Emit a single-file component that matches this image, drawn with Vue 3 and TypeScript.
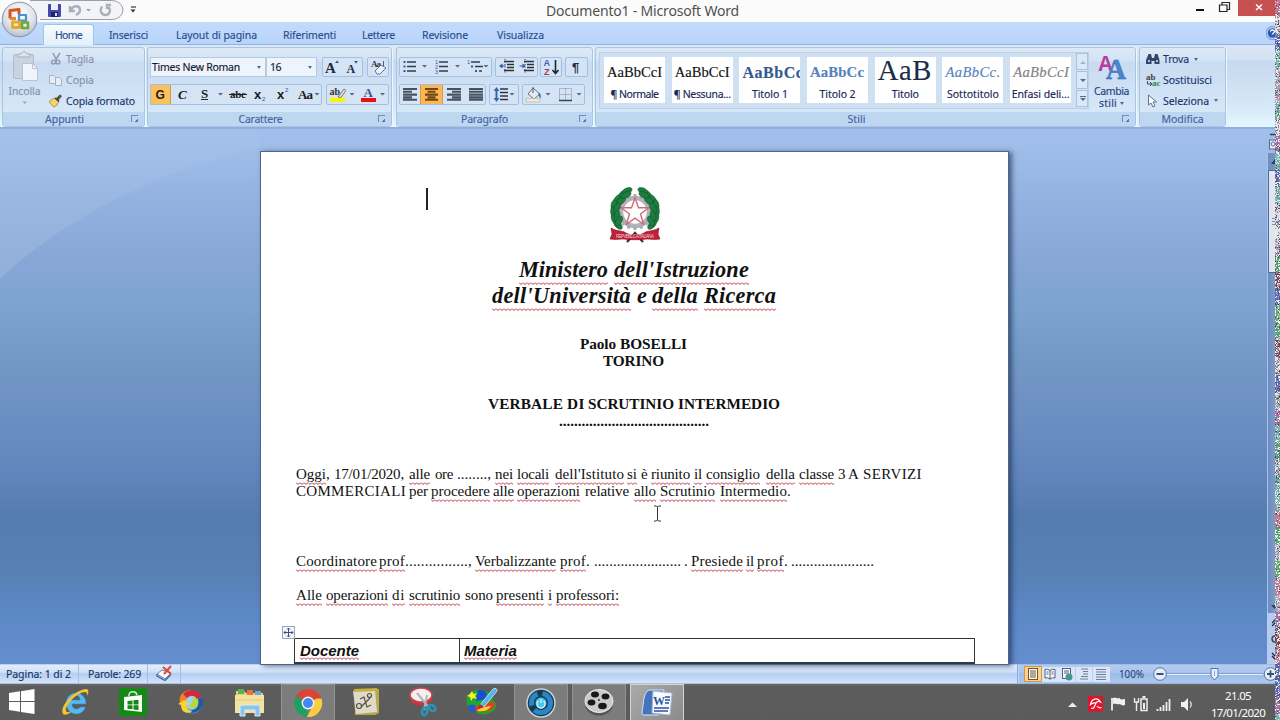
<script setup lang="ts">
interface Seg { t: string; x: number; e: number; u?: boolean }
interface Line { kind: string; gap: number; segs: Seg[] }

/* Spreads the letters of an element so that its text fills the given width. */
const vFit = {
  mounted(el: HTMLElement, binding: { value: number }) {
    const range = document.createRange()
    range.selectNodeContents(el)
    const natural = range.getBoundingClientRect().width
    const count = (el.textContent ?? '').length
    if (count > 0) el.style.letterSpacing = `${(binding.value - natural) / count}px`
  },
}

const tabs = [
  { t: 'Home', w: 27, pad: 11, on: true },
  { t: 'Inserisci', w: 39, pad: 15 },
  { t: 'Layout di pagina', w: 81, pad: 13 },
  { t: 'Riferimenti', w: 53, pad: 13 },
  { t: 'Lettere', w: 33, pad: 13 },
  { t: 'Revisione', w: 46, pad: 14 },
  { t: 'Visualizza', w: 47, pad: 15 },
]

const styles = [
  { s: 'AaBbCcI', n: '¶ Normale', w: 48, sw: 55, c: 'norm' },
  { s: 'AaBbCcI', n: '¶ Nessuna...', w: 57, sw: 55, c: 'norm' },
  { s: 'AaBbCc', n: 'Titolo 1', w: 36, sw: 61, c: 't1' },
  { s: 'AaBbCc', n: 'Titolo 2', w: 36, sw: 54, c: 't2' },
  { s: 'AaB', n: 'Titolo', w: 27, sw: 54, c: 't0' },
  { s: 'AaBbCc.', n: 'Sottotitolo', w: 52, sw: 55, c: 'sub' },
  { s: 'AaBbCcI', n: 'Enfasi deli...', w: 58, sw: 56, c: 'enf' },
]

const lines: Line[] = [
  { kind: 'head', gap: 105, segs: [{ t: 'Ministero', x: 519, e: 608, u: true }, { t: "dell'Istruzione", x: 614, e: 749, u: true }] },
  { kind: 'head', gap: 0, segs: [{ t: "dell'Università", x: 492, e: 631, u: true }, { t: 'e', x: 637, e: 646 }, { t: 'della', x: 652, e: 698, u: true }, { t: 'Ricerca', x: 704, e: 776, u: true }] },
  { kind: 'bold', gap: 26, segs: [{ t: 'Paolo', x: 580, e: 616 }, { t: 'BOSELLI', x: 620, e: 687 }] },
  { kind: 'bold', gap: 0, segs: [{ t: 'TORINO', x: 603, e: 664 }] },
  { kind: 'bold', gap: 26, segs: [{ t: 'VERBALE', x: 488, e: 563 }, { t: 'DI', x: 567, e: 585 }, { t: 'SCRUTINIO', x: 588, e: 674 }, { t: 'INTERMEDIO', x: 678, e: 780 }] },
  { kind: 'bold', gap: 0, segs: [{ t: '........................................', x: 559, e: 709 }] },
  {
    kind: 'body', gap: 37, segs: [
      { t: 'Oggi', x: 296, e: 326, u: true }, { t: ',', x: 326, e: 329 }, { t: '17/01/2020,', x: 334, e: 404 }, { t: 'alle', x: 409, e: 430, u: true },
      { t: 'ore', x: 435, e: 453 }, { t: '........,', x: 457, e: 491 }, { t: 'nei', x: 495, e: 513, u: true }, { t: 'locali', x: 517, e: 549, u: true },
      { t: "dell'Istituto", x: 555, e: 624, u: true }, { t: 'si', x: 627, e: 637, u: true }, { t: 'è', x: 641, e: 647 }, { t: 'riunito', x: 651, e: 690, u: true },
      { t: 'il', x: 694, e: 702, u: true }, { t: 'consiglio', x: 706, e: 760, u: true }, { t: 'della', x: 766, e: 795, u: true }, { t: 'classe', x: 799, e: 834, u: true },
      { t: '3', x: 838, e: 845 }, { t: 'A', x: 848, e: 859 }, { t: 'SERVIZI', x: 863, e: 922 },
    ],
  },
  {
    kind: 'body', gap: 0, segs: [
      { t: 'COMMERCIALI', x: 296, e: 406 }, { t: 'per', x: 409, e: 428 }, { t: 'procedere', x: 431, e: 490, u: true }, { t: 'alle', x: 493, e: 514, u: true },
      { t: 'operazioni', x: 517, e: 580, u: true }, { t: 'relative', x: 585, e: 629 }, { t: 'allo', x: 634, e: 656, u: true }, { t: 'Scrutinio', x: 660, e: 715, u: true },
      { t: 'Intermedio', x: 720, e: 787, u: true }, { t: '.', x: 787, e: 790 },
    ],
  },
  {
    kind: 'body', gap: 53, segs: [
      { t: 'Coordinatore', x: 296, e: 377, u: true }, { t: 'prof', x: 379, e: 405, u: true }, { t: '................,', x: 405, e: 472 }, { t: 'Verbalizzante', x: 475, e: 556, u: true },
      { t: 'prof', x: 560, e: 586, u: true }, { t: '.', x: 586, e: 590 }, { t: '.......................', x: 594, e: 681 }, { t: '.', x: 684, e: 688 },
      { t: 'Presiede', x: 691, e: 743, u: true }, { t: 'il', x: 746, e: 754, u: true }, { t: 'prof', x: 757, e: 784, u: true }, { t: '.', x: 784, e: 788 },
      { t: '......................', x: 791, e: 874 },
    ],
  },
  {
    kind: 'body', gap: 17, segs: [
      { t: 'Alle', x: 296, e: 322, u: true }, { t: 'operazioni', x: 326, e: 388, u: true }, { t: 'di', x: 392, e: 405, u: true }, { t: 'scrutinio', x: 409, e: 460, u: true },
      { t: 'sono', x: 465, e: 493 }, { t: 'presenti', x: 496, e: 544, u: true }, { t: 'i', x: 548, e: 552, u: true }, { t: 'professori:', x: 556, e: 619, u: true },
    ],
  },
]
const PAGE_X = 260
function place(segs: Seg[], i: number) {
  const from = i === 0 ? PAGE_X : segs[i - 1].e
  return { marginLeft: `${segs[i].x - from}px`, width: `${segs[i].e - segs[i].x}px` }
}

/* Interference strip down the right edge of the display. */
let seed = 20200117
function rnd() {
  seed = (seed * 1103515245 + 12345) % 2147483648
  return seed / 2147483648
}
const hues = ['#3fae5a', '#c9c9d4', '#b45fae', '#d8d4dc', '#4b63c8', '#6fc3b5', '#d9718f', '#e4e4e4', '#8f3540', '#9fb0c4', '#57c04f', '#b8a6c0']
const noise: { x: number; y: number; c: string }[] = []
let tint = hues[0]
for (let y = 0; y < 720; y++) {
  if (y % 17 === 0) tint = hues[Math.floor(rnd() * hues.length)]
  for (let x = 0; x < 5; x++) {
    const k = rnd()
    const c = k < 0.38 ? tint : k < 0.62 ? '#ececf0' : k < 0.84 ? '#8a8f98' : k < 0.92 ? '#4b4f5a' : hues[Math.floor(rnd() * hues.length)]
    noise.push({ x, y, c })
  }
}

const teeth = Array.from({ length: 16 }, (_, i) => i * 22.5)
const leaves = [
  { x: 13, y: 9, r: -50 }, { x: 18, y: 5, r: -25 }, { x: 8, y: 14, r: -62 }, { x: 5, y: 19, r: -80 }, { x: 4.500, y: 26, r: -95 },
  { x: 5.500, y: 33, r: -112 }, { x: 9, y: 39, r: -135 }, { x: 12, y: 15, r: -40 }, { x: 8, y: 22, r: -65 }, { x: 8, y: 30, r: -80 },
  { x: 17, y: 9, r: -25 }, { x: 10, y: 35, r: -60 },
]
</script>

<template>
  <div class="screen">
    <header class="titlebar">
      <div class="qat">
        <svg width="140" height="22" viewBox="0 0 140 22">
          <path d="M30 .5H112a11 9.5 0 0 1 0 19H40" fill="#f3f4f8" stroke="#9a9faa" />
          <rect x="48" y="4" width="13" height="13" rx="1" fill="#4648a8" /><rect x="51" y="4" width="7" height="6" fill="#e9efff" /><rect x="51" y="12" width="7" height="5" fill="#20246e" /><rect x="55" y="13" width="2" height="3" fill="#dde" />
          <path d="M70 6v5h5M71 10c2-5 9-5 9 0 0 3-2 4-4 5" fill="none" stroke="#a9afbd" stroke-width="2.4" />
          <path d="M86 9h5l-2.500 2.500z" fill="#9ca0aa" />
          <path d="M102 6.500c-3 5 0 8.500 3.500 8.500s6-4 3-8M111 5h-4v4" fill="none" stroke="#a9afbd" stroke-width="2.300" />
          <path d="M131 7h5" stroke="#444" stroke-width="1.300" /><path d="M130.500 9.500h5l-2.500 3z" fill="#333" />
        </svg>
      </div>
      <div class="apptitle"><span v-fit="193">Documento1 - Microsoft Word</span></div>
      <div class="wincontrols">
        <svg width="90" height="18" viewBox="1190 0 90 18">
          <rect x="1196" y="9" width="8" height="2" fill="#111" />
          <path d="M1222 4.500v-2h7.500v7h-2M1219.500 5h7.500v6.500h-7.500z" fill="none" stroke="#222" stroke-width="1.200" />
          <rect x="1238" y="0" width="42" height="16" fill="#c75050" />
          <path d="M1256 4.500l6 5.500M1262 4.500l-6 5.500" stroke="#fff" stroke-width="1.600" />
        </svg>
      </div>
    </header>

    <nav class="tabs">
      <div v-for="tab in tabs" :key="tab.t" class="tab" :class="{ on: tab.on }" :style="{ paddingLeft: tab.pad + 'px', paddingRight: (tab.on ? 10 : tab.pad) + 'px' }">
        <span v-fit="tab.w" :style="{ width: tab.w + 'px' }">{{ tab.t }}</span>
      </div>
      <svg class="help" width="14" height="18" viewBox="1266 24 14 18"><circle cx="1272.500" cy="33" r="6.500" fill="#bcd2f2" stroke="#6d8fcc" /><circle cx="1272.500" cy="33" r="4.800" fill="#2b59bd" /><path d="M1270.500 31.500c0-2 4-2 4 0 0 1.500-2 1.500-2 3" stroke="#fff" stroke-width="1.300" fill="none" /></svg>
    </nav>

    <svg class="orb" width="40" height="40" viewBox="0 0 40 40">
      <defs><radialGradient id="orb" cx=".5" cy=".35" r=".7"><stop offset="0" stop-color="#fff" /><stop offset=".6" stop-color="#dfe3ec" /><stop offset="1" stop-color="#a9b2c3" /></radialGradient></defs>
      <circle cx="19.500" cy="19.500" r="17.300" fill="url(#orb)" stroke="#8792a8" />
      <g fill="none" stroke-width="3" stroke-linejoin="round">
        <path d="M10 18.500v-8l9-1v5" stroke="#d9531e" /><path d="M10 18.500h6" stroke="#e8862a" />
        <rect x="19" y="15" width="7" height="5.500" stroke="#4a90d9" stroke-width="2.200" />
        <path d="M12.500 22v5.500h7v-5.500z" stroke="#e9a823" stroke-width="2.800" />
        <rect x="22" y="22.500" width="6" height="5.500" stroke="#6eaa2f" stroke-width="2.600" />
      </g>
    </svg>

    <div class="ribbon">
      <section class="group appunti">
        <div class="body">
          <div class="paste">
            <svg width="30" height="32" viewBox="10 51 30 32"><rect x="13.500" y="54.500" width="20" height="24" rx="1.500" fill="#c9d2df" stroke="#b0bac9" /><path d="M18 57v-3h3c1-3 5-3 6 0h3v3z" fill="#dde3ec" stroke="#a4afbf" /><path d="M22.500 63.500h10l5 5v12h-15z" fill="#eff4fb" stroke="#b9c4d4" /><path d="M32.500 63.500v5h5" fill="none" stroke="#b9c4d4" /></svg>
            <span class="lbl dim"><b v-fit="32">Incolla</b></span>
            <svg width="6" height="4" viewBox="0 0 6 4"><path d="M.5.500h4.500l-2.200 2.500z" fill="#9aa8bd" /></svg>
          </div>
          <div class="stack">
            <div class="cmd dim"><svg width="16" height="14" viewBox="48 52 16 14"><g fill="none" stroke="#8d98aa" stroke-width="1.400"><path d="M53 53l3.500 7M60 53l-4.500 7" /><circle cx="53.500" cy="62" r="1.900" /><circle cx="58" cy="62" r="1.900" /></g></svg><span v-fit="28">Taglia</span></div>
            <div class="cmd dim"><svg width="16" height="14" viewBox="48 73 16 14"><g fill="#e6edf6" stroke="#a6b2c4"><path d="M49.500 75.500h4l2 2v6h-6z" /><path d="M55.500 77.500h4l2 2v6h-6z" /></g></svg><span v-fit="28">Copia</span></div>
            <div class="cmd"><svg width="16" height="14" viewBox="48 94 16 14"><path d="M55 99l5-4.500 2 1.500-4 5z" fill="#5a5446" /><path d="M51 100l4-2 4 3-2 4-3 2-5-5z" fill="#f2d36c" stroke="#a8842b" stroke-width=".8" /><path d="M55 98l4 3.500" stroke="#3d3a35" stroke-width="1.500" /></svg><span v-fit="69">Copia formato</span></div>
          </div>
        </div>
        <footer><span v-fit="39">Appunti</span><i class="launch"></i></footer>
      </section>

      <section class="group carattere">
        <div class="rows">
          <div class="row">
            <div class="combo font"><span v-fit="88">Times New Roman</span><i class="dd"></i></div>
            <div class="combo size"><span v-fit="11">16</span><i class="dd"></i></div>
            <svg class="box m5" width="41" height="20" viewBox="322 57 41 20"><g class="serif" fill="#222b3c" font-weight="bold"><text x="325" y="73" font-size="15">A</text><text x="346.500" y="73" font-size="12">A</text></g><path d="M335 63h4l-2-2.500zM354 61h4l-2 2.500z" fill="#3a4f88" /></svg>
            <svg class="box m4" width="22" height="20" viewBox="366 57 22 20"><text x="370" y="67" class="serif" font-size="9" font-weight="bold" fill="#333" textLength="10">Aa</text><path d="M382.500 61v5" stroke="#3d5c9c" /><path d="M374 71l6-6 5 3-6 6h-3z" fill="#eef1fb" stroke="#66719a" /></svg>
          </div>
          <div class="row r2">
            <svg class="box" width="172" height="21" viewBox="150 84 172 21">
              <rect x="150.500" y="84.500" width="20" height="20" fill="#fdc15c" stroke="#d39a48" />
              <g fill="#1b1b22"><text x="155.500" y="98.500" class="sans" font-size="12" font-weight="bold">G</text><text x="178" y="98.500" class="serif" font-size="13" font-weight="bold" font-style="italic">C</text><text x="201" y="98" class="serif" font-size="13" font-weight="bold">S</text><path d="M201 99.500h7" stroke="#222" /><text x="230" y="98" class="serif" font-size="11" font-weight="bold" textLength="16">abc</text><path d="M229 94.500h18" stroke="#222" /><text x="254" y="98.500" class="sans" font-size="13" font-weight="bold">x</text><text x="277" y="98.500" class="sans" font-size="13" font-weight="bold">x</text><text x="298" y="99" class="serif" font-size="13" font-weight="bold" textLength="15">Aa</text></g>
              <g fill="#2c4f9b" class="sans" font-size="6"><text x="262" y="100.500">2</text><text x="285" y="92">2</text></g>
              <path d="M218 93h5l-2.500 2.500zM314.500 93h5l-2.500 2.500z" fill="#56698f" />
            </svg>
            <svg class="box m4" width="63" height="21" viewBox="325 84 63 21"><rect x="329" y="97.500" width="15" height="4.500" fill="#f8f412" /><text x="328.500" y="95" class="serif" font-size="10" font-weight="bold" fill="#333">ab</text><path d="M337 97l6-8 2 1.500-5 7z" fill="#dcdcc8" stroke="#666" stroke-width=".8" /><rect x="360" y="98" width="15" height="4" fill="#e41218" /><text x="362.500" y="97" class="serif" font-size="13" font-weight="bold" fill="#40548c">A</text><path d="M348.500 93h5l-2.500 2.500zM379 93h5l-2.500 2.500z" fill="#56698f" /></svg>
          </div>
        </div>
        <footer><span v-fit="44">Carattere</span><i class="launch"></i></footer>
      </section>

      <section class="group paragrafo">
        <div class="rows">
          <div class="row">
            <svg class="box" width="93" height="20" viewBox="399 57 93 20">
              <path d="M407 62h9M407 66.500h9M407 71h9M439 62h9M439 66.500h9M439 71h9" stroke="#333c50" stroke-width="1.500" /><path d="M403.500 62h2M403.500 66.500h2M403.500 71h2" stroke="#2d58ac" stroke-width="2" />
              <g class="sans" font-size="5.500" fill="#2d58ac"><text x="435" y="64">1</text><text x="435" y="69">2</text><text x="435" y="74">3</text><text x="467" y="64">1</text></g>
              <path d="M471 62h9M475 66.500h8M479 71h3" stroke="#333c50" stroke-width="1.500" /><path d="M471 66.500h2M475 71h2" stroke="#2d58ac" stroke-width="2" />
              <path d="M422 65h5l-2.500 2.500zM455 65h5l-2.500 2.500zM483.500 65h5l-2.500 2.500z" fill="#56698f" />
            </svg>
            <svg class="box m3" width="43" height="20" viewBox="495 57 43 20"><path d="M504 61.500h10M507 64.500h7M507 67.500h7M504 70.500h10M524 61.500h10M527 64.500h7M527 67.500h7M524 70.500h10" stroke="#2a3040" stroke-width="1.700" /><path d="M499 66l3.500-2.500v2h3v1h-3v2zM525.500 66l-3-2.500v2h-3v1h3v2z" fill="#2d58ac" /><path d="M505 59v15M525 59v15" stroke="#333" stroke-dasharray="1 1.500" /></svg>
            <svg class="box m2" width="22" height="20" viewBox="540 57 22 20"><text x="543.500" y="65.500" class="sans" font-size="9" font-weight="bold" fill="#3a62b4">A</text><text x="544" y="74.500" class="sans" font-size="9" font-weight="bold" fill="#a83a4c">Z</text><path d="M555.500 60v12M552.500 70l3 3.500 3-3.500" fill="none" stroke="#1d2330" stroke-width="1.600" /></svg>
            <svg class="box m3" width="23" height="20" viewBox="565 57 23 20"><text x="572" y="71.500" class="sans" font-size="13" font-weight="bold" fill="#252c3a">¶</text></svg>
          </div>
          <div class="row r2">
            <svg class="box" width="87" height="21" viewBox="399 84 87 21"><rect x="420.500" y="84.500" width="22" height="20" fill="#fdb653" stroke="#d39a48" /><g stroke="#465062" stroke-width="2.100"><path d="M403 89h14M403 91.800h9M403 94.600h14M403 97.400h9M403 99.800h14" /><path d="M447 89h14M452 91.800h9M447 94.600h14M452 97.400h9M447 99.800h14" /><path d="M469 89h14M469 91.800h14M469 94.600h14M469 97.400h14M469 99.800h14" /><path d="M425 89h13M427.500 91.800h8M425 94.600h13M427.500 97.400h8M425 99.800h13" stroke="#6e4712" /></g></svg>
            <svg class="box m3" width="30" height="21" viewBox="489 84 30 21"><path d="M500 89h8M500 92.500h8M500 96h8M500 99.500h8" stroke="#2d3546" stroke-width="1.500" /><path d="M493.500 91l3-4 3 4h-2v7h2l-3 4-3-4h2v-7z" fill="#3a66b0" /><path d="M509.500 93h5l-2.500 2.500z" fill="#56698f" /></svg>
            <svg class="box m3" width="63" height="21" viewBox="522 84 63 21"><path d="M533 88l7 6-6 5-6-5z" fill="#e4eaf4" stroke="#66738c" /><path d="M533 93v-6" stroke="#555" /><path d="M538 93c3 0 3 3 3 5-2 0-2-3-3-5" fill="#3b70bd" /><rect x="526" y="98.500" width="14" height="3.500" fill="#eee9d6" stroke="#b2b0a4" stroke-width=".6" /><path d="M559.500 88.500h12v12h-12zM565.500 88.500v12M559.500 94.500h12" fill="none" stroke="#7d8aa3" stroke-dasharray="1 1" /><path d="M559 100.500h13" stroke="#38435a" stroke-width="1.400" /><path d="M545.500 93h5l-2.500 2.500zM576.500 93h5l-2.500 2.500z" fill="#56698f" /></svg>
          </div>
        </div>
        <footer><span v-fit="47">Paragrafo</span><i class="launch"></i></footer>
      </section>

      <section class="group stili">
        <div class="body">
          <div class="gallery">
            <div v-for="(s, i) in styles" :key="i" class="card">
              <div class="sample" :class="s.c"><span v-fit="s.sw">{{ s.s }}</span></div>
              <div class="sname"><span v-fit="s.w">{{ s.n }}</span></div>
            </div>
            <div class="gscroll"><i class="up"></i><i class="down"></i><i class="more"></i></div>
          </div>
          <div class="change">
            <svg width="32" height="28" viewBox="1095 53 32 28"><text x="1097" y="71" class="sans" font-size="22" font-weight="bold" fill="#b83c9f" textLength="15" lengthAdjust="spacingAndGlyphs">A</text><text x="1105" y="79" class="serif" font-size="29" font-weight="bold" textLength="20" lengthAdjust="spacingAndGlyphs" fill="#4d84cf" stroke="#3767ae" stroke-width=".5">A</text></svg>
            <span class="lbl"><b v-fit="35">Cambia</b></span>
            <span class="lbl second"><b v-fit="18">stili</b><i class="dd"></i></span>
          </div>
        </div>
        <footer><span v-fit="18">Stili</span><i class="launch"></i></footer>
      </section>

      <section class="group modifica">
        <div class="stack">
          <div class="cmd"><svg width="18" height="14" viewBox="1144 52 18 14"><path d="M1146 64v-4l2.500-6h2.500l1 4h2l1-4h2.500l2 6v4h-5v-3h-3v3z" fill="#33466b" /><path d="M1148 61h2M1156 61h2" stroke="#dbe6f8" stroke-width="1.500" /></svg><span v-fit="26">Trova</span><i class="dd"></i></div>
          <div class="cmd"><svg width="18" height="14" viewBox="1144 73 18 14"><g class="serif" font-weight="bold" font-size="9"><text x="1146" y="79.500" fill="#444">ab</text><text x="1152" y="86" fill="#2e8a4a">ac</text></g><path d="M1147.500 81v3h4M1150 82l2 2-2 2" stroke="#445" fill="none" /></svg><span v-fit="49">Sostituisci</span></div>
          <div class="cmd"><svg width="18" height="14" viewBox="1144 94 18 14"><path d="M1148.500 95v10l2.500-2 2 4 2-1-2-4h3.500z" fill="#fff" stroke="#5f6f8c" /></svg><span v-fit="46">Seleziona</span><i class="dd"></i></div>
        </div>
        <footer><span v-fit="42">Modifica</span></footer>
      </section>
    </div>

    <main class="work">
      <svg class="swoosh" width="260" height="180" viewBox="0 0 260 180"><defs><linearGradient id="sw" x1="0" y1="0" x2="0" y2="1"><stop offset="0" stop-color="#fff" stop-opacity=".02" /><stop offset="1" stop-color="#fff" stop-opacity=".12" /></linearGradient></defs><path d="M0 0H260V18C160 40 60 92 0 150z" fill="url(#sw)" /></svg>
      <article class="page">
        <i class="caret"></i>
        <svg class="emblem" width="52" height="58" viewBox="0 0 52 58">
          <circle cx="26" cy="26" r="14" fill="#fff" stroke="#b2b5b8" stroke-width="4.500" />
          <rect v-for="a in teeth" :key="a" x="24.500" y="8" width="3" height="4" fill="#a9acaf" :transform="`rotate(${a} 26 26)`" />
          <path d="M26 12l3.500 9.700h10.300l-8.300 6.300 3.100 10.200-8.600-6-8.600 6 3.100-10.200-8.300-6.300h10.300z" fill="#fff" stroke="#cf6a7a" stroke-width="1.400" />
          <g fill="#1d7c3e" stroke="#0f5530" stroke-width=".5">
            <g v-for="side in [1, -1]" :key="side" :transform="side === 1 ? '' : 'translate(52 0) scale(-1 1)'">
              <ellipse v-for="(l, i) in leaves" :key="i" :cx="l.x" :cy="l.y" rx="5.400" ry="2.900" :transform="`rotate(${l.r} ${l.x} ${l.y})`" />
            </g>
          </g>
          <path d="M18 56l8-9 8 9" stroke="#4a2a20" stroke-width="2.200" fill="none" />
          <path d="M2 42c7 4 11 2 15 5 6 3 12 3 18 0 4-3 8-1 15-5l-1 6 2 5c-5 1-9 0-13 0-7 1-17 1-24 0-4 0-8 1-13 0l2-5z" fill="#c11f3a" stroke="#7f1325" stroke-width=".6" />
          <text x="7" y="52" font-size="4.500" textLength="38" fill="#f3c4ca" class="sans">REPVBBLICA ITALIANA</text>
        </svg>
        <div v-for="(line, li) in lines" :key="li" class="line" :class="line.kind" :style="{ marginTop: line.gap + 'px' }">
          <span v-for="(s, si) in line.segs" :key="si" v-fit="s.e - s.x" class="seg" :class="{ bad: s.u }" :style="place(line.segs, si)">{{ s.t }}</span>
        </div>
        <svg class="ibeam" width="9" height="17" viewBox="0 0 9 17"><path d="M1 1h2.500l1 1 1-1H8M4.500 2v13M1 16h2.500l1-1 1 1H8" fill="none" stroke="#333" /></svg>
        <svg class="handle" width="13" height="13" viewBox="0 0 13 13"><rect x=".5" y=".5" width="12" height="12" fill="#f2f5fb" stroke="#9aa4b8" /><path d="M6.500 2v9M2 6.500h9M5 3.500l1.500-1.500L8 3.500M5 9.500L6.500 11 8 9.500M3.500 5L2 6.500 3.500 8M9.500 5L11 6.500 9.500 8" fill="none" stroke="#3d507c" /></svg>
        <div class="table">
          <div class="cell first"><span v-fit="59" class="bad">Docente</span></div>
          <div class="cell"><span v-fit="53" class="bad">Materia</span></div>
        </div>
      </article>
      <svg class="vscroll" width="13" height="535" viewBox="1267 129 13 535">
        <defs><linearGradient id="vs" x1="0" x2="1"><stop offset="0" stop-color="#6d8cbd" /><stop offset="1" stop-color="#86a4d2" /></linearGradient></defs>
        <rect x="1268" y="153" width="12" height="511" fill="url(#vs)" /><path d="M1267.500 153v511" stroke="#a4c3ee" />
        <path d="M1270 134.500h10" stroke="#2b4066" stroke-width="1.500" /><rect x="1269.500" y="140" width="10" height="9" fill="#e8eefa" stroke="#56698f" /><circle cx="1273" cy="144" r="2" fill="none" stroke="#56698f" />
        <rect x="1269" y="154" width="11" height="15" fill="#7791bd" /><path d="M1271 164l4-5 4 5z" fill="#26446b" />
        <rect x="1268.500" y="170.500" width="12" height="102" fill="#dfe6f1" stroke="#56698f" /><path d="M1272 218.500h8M1272 221.500h8M1272 224.500h8" stroke="#7f93b3" />
        <path d="M1271 605h7l-3.500 4z" fill="#26446b" />
        <rect x="1267" y="613" width="13" height="51" fill="#b5ccee" />
        <path d="M1272 623l3-3 3 3M1272 626l3-3 3 3M1272 653l3 3 3-3M1272 656l3 3 3-3" fill="none" stroke="#1e2f50" stroke-width="1.400" /><circle cx="1275" cy="639" r="3" fill="none" stroke="#33445f" stroke-width="1.400" />
      </svg>
    </main>

    <footer class="status">
      <span class="st s1"><b v-fit="65">Pagina: 1 di 2</b></span>
      <span class="st s2"><b v-fit="53">Parole: 269</b></span>
      <span class="st s3"><svg width="18" height="16" viewBox="156 666 18 16"><path d="M157 675l5-4 9 3-6 6z" fill="#f4f7fc" stroke="#6b83b4" /><path d="M157 675v2l8 4.500 6-6" fill="none" stroke="#41629f" stroke-width="1.300" /><path d="M163 668l8 7M171 667l-7 8" stroke="#e0492d" stroke-width="1.900" /></svg></span>
      <svg class="view" width="264" height="20" viewBox="1016 664 264 20">
        <path d="M1017.500 664v20" stroke="#8aabdb" /><path d="M1018.500 664v20" stroke="#f3f8ff" />
        <rect x="1018" y="664" width="262" height="20" fill="#7fa5de" opacity=".45" />
        <rect x="1024" y="667" width="86" height="15" fill="#d9e6f7" /><rect x="1024.500" y="666.500" width="17" height="15" fill="#fbd18c" stroke="#cf9a50" />
        <rect x="1028.500" y="668.500" width="9" height="11" fill="#fff8e8" stroke="#695737" /><path d="M1030 671h6M1030 673h6M1030 675h6M1030 677h6" stroke="#695737" />
        <path d="M1045 669.500q2.500-1 5 1 2.500-2 5-1v8.500q-2.500-1-5 1-2.500-2-5-1zM1050 670.500v9M1046.500 672h2M1046.500 674h2M1051.500 672h2M1051.500 674h2" fill="#f7fafe" stroke="#50607d" />
        <rect x="1062.500" y="668.500" width="8" height="10" fill="#f7fafe" stroke="#50607d" /><path d="M1064 671h5M1064 673h5" stroke="#50607d" /><circle cx="1069" cy="677" r="3.500" fill="#4a968b" />
        <path d="M1081 669h7M1083 671.500h5M1083 674h5M1081 676.500h7M1080 679h8M1096 669.500h10M1096 672h10M1096 674.500h10M1096 677h10M1096 679.500h10" stroke="#707f98" stroke-width="1.200" />
        <path d="M1075.500 667v15M1092.500 667v15" stroke="#bdd0eb" />
        <text x="1119" y="678" class="ui" font-size="10.500" textLength="25" lengthAdjust="spacingAndGlyphs" fill="#1f3a72">100%</text>
        <path d="M1167 674.500h96" stroke="#e6effb" /><path d="M1167 673.500h96" stroke="#6b8ec6" stroke-width=".6" />
        <g fill="#e5eefb" stroke="#5576ad"><circle cx="1160" cy="674" r="6.300" /><circle cx="1270.500" cy="674" r="6.300" /><path d="M1211 668.500h7v7.500l-3.500 4-3.500-4z" /></g>
        <path d="M1156.500 674h7M1267 674h7M1270.500 670.500v7" stroke="#384e78" stroke-width="1.800" /><path d="M1214.500 671v5" stroke="#8ea9d2" />
      </svg>
    </footer>

    <div class="taskbar">
      <div class="slot start"><svg width="26" height="26" viewBox="0 0 26 26"><path d="M0 4l11-1.700V12H0zM12 2.200L25.500 0v12H12zM0 13h11v9.700L0 21zM12 13h13.500v12L12 22.900z" fill="#fff" /></svg></div>
      <div class="slot"><svg width="30" height="30" viewBox="0 0 30 30"><path d="M6 15a10 10 0 1 1 20 2H12c0 6 7 6 8 3h5.500C22 31 6 29 6 15zm6-2h8c0-6-7-6-8 0z" fill="#58b9ee" stroke="#2f86c4" stroke-width=".6" /><path d="M3 27C-1 20 14 3 26 2c4 0 2 5 1 7 0-3 0-4-2-4C17 5 4 19 6 24c1 2 4 1 6 0-3 3-7 5-9 3z" fill="#f6c62d" /></svg></div>
      <div class="slot"><svg width="28" height="28" viewBox="0 0 28 28"><rect width="28" height="28" fill="#138a13" /><path d="M5 9l18-2v17L5 22z" fill="#fff" /><path d="M10 8c-1-5 7-6 8-1" fill="none" stroke="#cfe8cd" stroke-width="1.600" /><path d="M8.500 13l5-.6v4h-5zM14.500 12.300l5-.6v4.700h-5zM8.500 17.300h5v4l-5-.5zM14.500 17.300h5v4.800l-5-.6z" fill="#138a13" /></svg></div>
      <div class="slot"><svg width="26" height="28" viewBox="0 0 26 28"><circle cx="14" cy="14.500" r="11" fill="#4aa0d8" /><circle cx="14" cy="14.500" r="7" fill="#9bd3ee" /><path d="M15 9c5 1 7 4 5 8-2 4-7 4-9 1 3-2 4-5 4-9z" fill="#b5d83c" /><path d="M2 15C0 7 6 2 13 2l2 5c-6 0-8 4-7 9z" fill="#f2812a" /><path d="M5 6c5-6 15-5 19 3l-5 2c-3-4-6-4-10-1z" fill="#d2283b" /><path d="M0 16l6-4 6 4-4 1.500c1 4 4 5 7 6-6 3-12 1-12-6.500z" fill="#f6d434" /><path d="M14 22c6-1 7-6 6-11l4-2c4 8-2 16-11 16z" fill="#1f5aa3" /></svg></div>
      <div class="slot"><svg width="32" height="30" viewBox="0 0 32 30"><path d="M2 4h8l2 2h17v20H2z" fill="#e6ce7e" /><rect x="4" y="2" width="6" height="5" fill="#5fae55" /><rect x="13" y="3" width="6" height="5" fill="#e8734b" /><rect x="21" y="4" width="6" height="5" fill="#68a7df" /><path d="M1 8h29v18H1z" fill="#f4e3a0" /><path d="M2 13h27" stroke="#e2c877" /><path d="M6 29V20q0-2 2-2h16q2 0 2 2v9h-5v-6H11v6z" fill="#8fc4ea" stroke="#d7ecfa" /></svg></div>
      <div class="slot open"><svg width="30" height="30" viewBox="0 0 30 30"><path d="M15 15L3 8A14 14 0 0 1 27.500 8.500z" fill="#dd4437" /><path d="M15 15L3 8A14 14 0 0 0 14 29z" fill="#1da160" /><path d="M15 15L27.500 8.500A14 14 0 0 1 14 29l6-12z" fill="#fdcd41" /><path d="M14 9H28" stroke="#dd4437" stroke-width="3" /><circle cx="15" cy="15" r="6.400" fill="#f4f6f6" /><circle cx="15" cy="15" r="5" fill="#4587f3" /></svg></div>
      <div class="slot"><svg width="30" height="30" viewBox="0 0 30 30"><path d="M3 2h25v24l-4 2H4z" fill="#b5a94a" /><path d="M2 4l22-1 2 22-21 2z" fill="#dedbc9" /><path d="M3 2l23-1v3L3 5z" fill="#c9b13b" /><g fill="none" stroke="#554f44" stroke-width="1.200"><circle cx="8" cy="19" r="2.500" /><circle cx="18.500" cy="8.500" r="2" /><path d="M10 20l9-9M9 12l4-2 3 10 4-2" /></g></svg></div>
      <div class="slot"><svg width="30" height="30" viewBox="0 0 30 30"><ellipse cx="12" cy="11" rx="11" ry="8" fill="#c23742" /><ellipse cx="12" cy="8" rx="11" ry="7" fill="#f5f0ef" stroke="#cf4450" stroke-width="1.500" /><path d="M8 6l13 16M18 8l-3 15" stroke="#a9b7bd" stroke-width="2" /><ellipse cx="23" cy="21" rx="3.800" ry="2.600" fill="none" stroke="#2c92b6" stroke-width="2.600" transform="rotate(35 23 21)" /><ellipse cx="15.500" cy="24.500" rx="2.500" ry="3.800" fill="none" stroke="#2c92b6" stroke-width="2.600" transform="rotate(10 15.500 24.500)" /></svg></div>
      <div class="slot"><svg width="34" height="30" viewBox="0 0 34 30"><path d="M2 10C5 2 16 1 22 5c5 1 4 7 9 11 2 8-9 13-17 11C5 26 0 18 2 10z" fill="#22a52e" /><path d="M13 3c9-1 10 5 8 9l-10 2z" fill="#174fd1" /><path d="M3 19c3-2 7-2 8 1l1 6C7 26 3 23 3 19z" fill="#2459c9" /><path d="M10 24c0-7 9-8 19-9 4 6-8 12-19 9z" fill="#e53c24" /><path d="M12 24c3-4 8-4 14-5-3 5-9 6-14 5z" fill="#f6d52a" /><path d="M7 4l1.500 3 3.500-1-2 3 2 3-4-1-2 3-1-4-3-1 3-2z" fill="#faf032" /><path d="M15 18L28 2q4-2 4 2L19 20z" fill="#58b2ec" stroke="#d5eefd" stroke-width=".8" /><path d="M13 22l2-5 4 3z" fill="#a53426" /></svg></div>
      <div class="slot open"><svg width="30" height="30" viewBox="0 0 30 30"><circle cx="15" cy="15" r="14" fill="#193b51" stroke="#c2d0d8" stroke-width="1.500" /><circle cx="15" cy="15" r="9.500" fill="none" stroke="#2b86c4" stroke-width="5" stroke-dasharray="22 5 14 5" /><circle cx="15" cy="15" r="5.500" fill="#4bc5ed" /><path d="M12.500 13a4 4 0 1 0 5 0M15 11v4" fill="none" stroke="#d9f5ff" stroke-width="1.200" /></svg></div>
      <div class="slot open"><svg width="30" height="30" viewBox="0 0 30 30"><ellipse cx="15" cy="16" rx="14" ry="11.500" fill="#555" /><ellipse cx="15" cy="13" rx="14" ry="11.500" fill="#c9c9c9" stroke="#eee" /><g fill="#181818"><ellipse cx="11" cy="6.500" rx="4" ry="2.900" /><ellipse cx="21.500" cy="8.500" rx="3.900" ry="2.900" /><ellipse cx="7.500" cy="14.500" rx="3.900" ry="3" /><ellipse cx="18.500" cy="18" rx="4.300" ry="3.300" /></g><circle cx="15" cy="12" r="1" fill="#333" /></svg></div>
      <div class="slot open active"><svg width="32" height="30" viewBox="0 0 32 30"><path d="M8 2h15l-6 25H3c-2 0-2-1-2-3C3 14 2 5 8 2z" fill="#4673bd" stroke="#d9e6fa" /><path d="M12 3l19 2-2 22-18-2z" fill="#f7f9fd" stroke="#aab9d5" /><text x="12" y="17" class="serif" font-size="12" font-weight="bold" fill="#2855a5">W</text><path d="M24 9h5M24 12h5M24 15h4M13 20h15M13 23h14" stroke="#2b51a0" stroke-width="1.600" /></svg></div>
      <div class="tray">
        <svg width="130" height="20" viewBox="1066 694 130 20">
          <path d="M1068 707l4.500-4.500 4.500 4.500z" fill="#eee" />
          <rect x="1088" y="696" width="15" height="15.500" fill="#e2122c" /><path d="M1090.500 704.500c1-6 7-7.500 10-2.500-2-1-4-.5-4.500 1-2-.5-4 0-5.500 1.500zM1096 703l-2 4.500q-1.500 1.500-2.500.500M1097 706q2 2.500 4.500 1.500" fill="none" stroke="#fff" stroke-width="1.200" />
          <path d="M1112 698v12.500" stroke="#fff" stroke-width="1.600" /><path d="M1113 698c3-1 4 1 7 0v1c2 1 3 0 5 0v6c-2 1-4 0-5-1-3 1-4-1-7 0z" fill="#f0f0f0" />
          <rect x="1141" y="699" width="6" height="11.500" fill="none" stroke="#eee" stroke-width="1.500" /><path d="M1142.500 697h3M1144 703v6" stroke="#eee" stroke-width="2" /><path d="M1134.500 698v4h4v-4M1136.500 702v9" fill="none" stroke="#eee" stroke-width="1.400" />
          <path d="M1157.500 711v-2M1160.500 711v-4M1163.500 711v-6M1166.500 711v-9M1169.500 711v-12" stroke="#eee" stroke-width="1.800" />
          <path d="M1181 702h3l4-4v13l-4-4h-3z" fill="#f2f2f2" /><path d="M1190 701.500q2.500 3 0 6" fill="none" stroke="#ddd" stroke-width="1.300" />
        </svg>
        <div class="clock"><span v-fit="26">21.05</span><span v-fit="54">17/01/2020</span></div>
      </div>
    </div>

    <svg class="noise" width="5" height="720" viewBox="0 0 5 720" shape-rendering="crispEdges"><rect v-for="(p, i) in noise" :key="i" :x="p.x" :y="p.y" width="1" height="1" :fill="p.c" /></svg>
  </div>
</template>

<style>
body { margin: 0; overflow: hidden; }
</style>

<style scoped>
.screen { position: relative; width: 1280px; height: 720px; overflow: hidden; display: flex; flex-direction: column; font-family: "Noto Sans", "Open Sans", sans-serif; font-size: 10.5px; color: #1b3670; -webkit-text-stroke: .15px; }
.screen * { box-sizing: border-box; }
svg { display: block; flex: none; -webkit-text-stroke: 0; }
b { font-weight: inherit; }
.serif { font-family: "Liberation Serif", serif; }
.sans { font-family: "Liberation Sans", sans-serif; }
.ui { font-family: "Noto Sans", sans-serif; }
.titlebar { height: 22px; flex: none; display: flex; background: #fcfbfc; white-space: nowrap; }
.qat { width: 546px; }
.apptitle { width: 644px; font-size: 14px; line-height: 22px; color: #505050; -webkit-text-stroke: 0; }
.tabs { height: 23px; flex: none; display: flex; padding: 2px 0 0 43px; background: linear-gradient(#c3dafb, #b9d4fa); border-bottom: 1px solid #8fb3e2; position: relative; white-space: nowrap; }
.tab { height: 21px; line-height: 22px; color: #2a4d8f; flex: none; }
.tab span { display: inline-block; }
.tab.on { background: linear-gradient(#f6fbff, #e4effb); border: 1px solid #9fc4ea; border-bottom: 0; border-radius: 3px 3px 0 0; line-height: 20px; width: 51px; box-shadow: 0 0 2px #a9edf2; }
.help { margin-left: auto; }
.orb { position: absolute; left: 0; top: 0; }
.ribbon { height: 84px; flex: none; display: flex; padding: 2px 0 2px 2px; background: linear-gradient(#dbe7f5 0, #d3e1f2 15px, #c7d9ee 16px, #d6e7f7 60px, #e3f6ff 80px); border-bottom: 2px solid #8faedb; white-space: nowrap; }
.group { height: 80px; flex: none; display: flex; flex-direction: column; border: 1px solid #aac5e3; border-radius: 3px; background: linear-gradient(#dce9f6 0, #d3e3f4 13px, #c8dbf0 14px, #d6e7f8 64px); overflow: hidden; box-shadow: 1px 0 0 #eef6fd; }
.group > footer { margin-top: auto; height: 14px; line-height: 14px; background: #bfd6f0; text-align: center; color: #3f64a4; position: relative; flex: none; }
.launch { position: absolute; right: 6px; top: 3px; width: 7px; height: 7px; border-left: 1px solid #6d8bbb; border-top: 1px solid #6d8bbb; background: linear-gradient(135deg, transparent 50%, #5b7bae 51%) no-repeat 2px 2px / 4px 4px; }
.appunti { width: 143px; }
.appunti footer { padding-right: 18px; }
.carattere { width: 245px; margin-left: 2px; }
.carattere footer { padding-right: 18px; }
.paragrafo { width: 197px; margin-left: 4px; }
.paragrafo footer { padding-right: 20px; }
.stili { width: 541px; margin-left: 2px; }
.stili footer { padding-right: 18px; }
.modifica { width: 87px; margin-left: 3px; }
.body { display: flex; }
.paste { width: 41px; display: flex; flex-direction: column; align-items: center; padding: 3px 0 0 2px; }
.lbl { line-height: 13px; height: 13px; color: #27457f; }
.dim, .dim span { color: #8593aa; }
.paste .lbl { margin-top: 2px; }
.paste .lbl + svg { margin-top: 3px; }
.stack { padding: 1px 0 0 4px; display: flex; flex-direction: column; }
.cmd { height: 20.700px; display: flex; align-items: center; gap: 2px; }
.dd { display: inline-block; flex: none; width: 0; height: 0; border: 2.500px solid transparent; border-top: 3px solid #56698f; border-bottom: 0; }
.cmd .dd { margin-left: 4px; }
.modifica .cmd { gap: 1px; }
.rows { padding: 9px 0 0 2px; display: flex; flex-direction: column; }
.row { display: flex; height: 20px; }
.r2 { margin-top: 7px; height: 21px; }
.box { outline: 1px solid #a5bfe0; outline-offset: -1px; border-radius: 2px; background: #d5e4f4; }
.m2 { margin-left: 2px; } .m3 { margin-left: 3px; } .m4 { margin-left: 4px; } .m5 { margin-left: 5px; }
.combo { height: 20px; background: #eef4fb; border: 1px solid #b3cae6; display: flex; align-items: center; justify-content: space-between; padding: 0 4px 0 1px; color: #15202f; }
.combo.font { width: 116px; } .combo.size { width: 51px; margin-left: 0; padding-left: 3px; }
.gallery { display: flex; width: 490px; height: 57px; margin: 4px 0 0 3px; border: 1px solid #b9d0ea; background: #cfe0f3; padding: 4px 0 0 4px; }
.card { width: 61px; height: 46px; margin-right: 6.700px; background: #fff; overflow: hidden; flex: none; text-align: center; }
.sample { height: 30px; line-height: 31px; font-family: "Liberation Serif", serif; font-size: 14.600px; color: #111; text-align: left; padding-left: 3px; }
.t1 { font-size: 16px; font-weight: bold; color: #35598f; }
.t2 { font-size: 14.800px; font-weight: bold; color: #5682bf; }
.t0 { font-size: 28.500px; line-height: 27px; color: #1c2a44; }
.sub { font-style: italic; color: #5682bf; }
.enf { font-style: italic; color: #828282; }
.sname { line-height: 15px; color: #1a2858; }
.gscroll { width: 14px; margin: -4px 0 0 -2px; display: flex; flex-direction: column; }
.gscroll i { flex: 1; border: 1px solid #a9c3e4; background: #dae8f7; margin-bottom: 1px; position: relative; }
.gscroll i::after { content: ""; position: absolute; left: 3px; top: 7px; border: 3px solid transparent; border-top: 3px solid #56698f; border-bottom: 0; }
.gscroll .up::after { border-top: 0; border-bottom: 3px solid #a6b4c9; }
.gscroll .more::before { content: ""; position: absolute; left: 3px; top: 5px; width: 6px; height: 1px; background: #56698f; }
.change { width: 45px; padding-top: 5px; display: flex; flex-direction: column; align-items: center; }
.change .lbl { margin-top: 4px; line-height: 12px; height: 12px; }
.change .second { margin-top: 0; display: flex; align-items: center; gap: 3px; }
.modifica .stack { padding-left: 4px; }
.work { height: 535px; flex: none; position: relative; display: flex; justify-content: space-between; background: linear-gradient(#a2c0eb 0, #9dbbe7 30px, #93b2e0 70px, #87a7d7 130px, #7ca3d1 180px, #7397c6 235px, #6a8dc1 300px, #6285bd 340px, #547caf 390px, #5881b6 450px, #5c87c5 480px, #648ecd 535px); }
.swoosh { position: absolute; left: 0; top: 0; }
.page { position: relative; width: 747px; height: 512px; margin: 23px 0 0 261px; padding: 0; background: #fff; box-shadow: 0 0 0 1px #4f6583, 3px 1px 5px 1px rgba(25, 45, 85, .65); color: #111; white-space: nowrap; overflow: visible; display: flex; flex-direction: column; -webkit-text-stroke: 0; }
.caret { position: absolute; left: 165px; top: 36px; width: 2px; height: 22px; background: #222; }
.emblem { position: absolute; left: 348px; top: 34px; }
.line { display: flex; flex: none; height: 17px; margin-left: -1px; line-height: 17px; font-family: "Liberation Serif", serif; font-size: 15px; }
.seg { flex: none; height: 19px; }
.head { height: 26px; line-height: 26px; font-size: 22.300px; font-weight: bold; font-style: italic; }
.head .seg { height: 28px; }
.bold { font-size: 15.300px; font-weight: bold; }
.bad { background: url("data:image/svg+xml,%3Csvg xmlns='http://www.w3.org/2000/svg' width='4' height='3'%3E%3Cpath d='M0 .5L2 2.500L4 .5' fill='none' stroke='%23c42a3c' stroke-width='1'/%3E%3C/svg%3E") repeat-x left bottom; }
.ibeam { position: absolute; left: 392px; top: 353px; }
.handle { position: absolute; left: 21px; top: 474px; }
.table { display: flex; width: 681px; height: 26px; margin: auto 0 0 33px; border: 1.500px solid #333; border-bottom: 2px solid #2d3a46; font: italic bold 15px/24px "Liberation Sans", sans-serif; }
.cell { padding-left: 4px; }
.cell span { display: inline-block; height: 21px; }
.cell.first { width: 165px; border-right: 1px solid #333; padding-left: 5px; }
.vscroll { position: relative; }
.status { height: 20px; flex: none; display: flex; align-items: center; background: linear-gradient(#8eb2e8 0, #e2edfc 1px, #cfe0f8 8px, #b5cef1 10px, #d4e5fb 19px, #7f9ac3 20px); white-space: nowrap; color: #1c3566; }
.st { height: 20px; line-height: 20px; border-right: 1px solid #a3bfe5; }
.s1 { width: 79px; padding-left: 6px; } .s2 { width: 69px; padding-left: 9px; } .s3 { width: 33px; padding: 1px 0 0 8px; }
.view { margin-left: auto; }
.taskbar { height: 36px; flex: none; display: flex; background: linear-gradient(#6b6b6b 0, #5d5d5d 2px, #5b5b5b); }
.slot { width: 54.200px; height: 36px; margin: 0 2px; flex: none; display: flex; align-items: center; justify-content: center; }
.start { width: 46px; margin: 0; padding-right: 3px; }
.open { background: #7c7c7c; border: 1px solid #929292; border-bottom: 0; }
.active { background: linear-gradient(135deg, #a9a9a9, #8b8b8b); border-color: #d4d4d4; }
.tray { margin-left: auto; display: flex; padding-top: 10px; width: 214px; white-space: nowrap; }
.clock { width: 54px; margin: -7px 0 0 15px; display: flex; flex-direction: column; align-items: center; color: #fff; font-size: 11.500px; line-height: 17px; -webkit-text-stroke: 0; }
.noise { position: absolute; right: 0; top: 0; }
</style>
